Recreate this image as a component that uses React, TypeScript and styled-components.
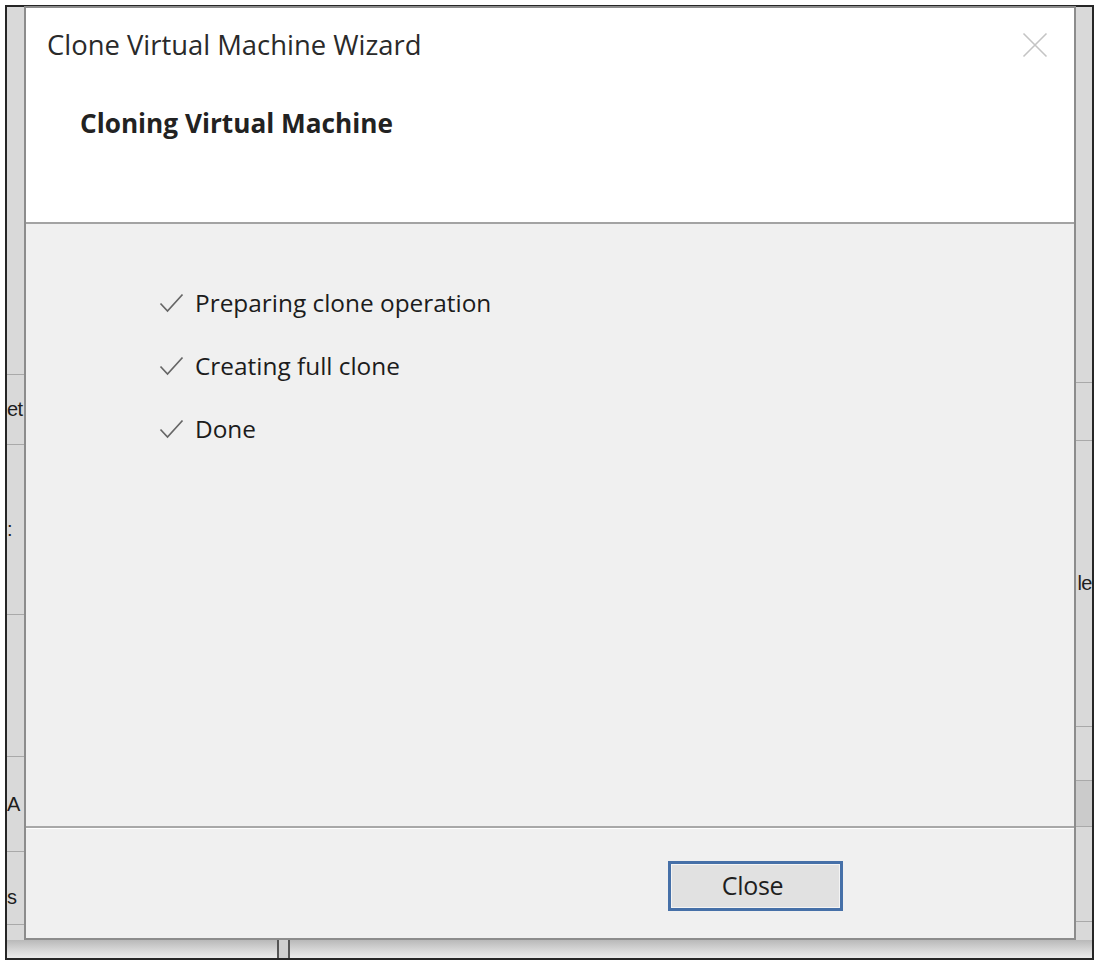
import React from "react";
import styled, { createGlobalStyle } from "styled-components";

const Global = createGlobalStyle`
  html, body { margin: 0; padding: 0; background: #ffffff; }
  body { font-family: "Open Sans", "Noto Sans", "Liberation Sans", sans-serif; }
`;

const Page = styled.div`
  padding: 5px 0 0 5px;
`;

const Frame = styled.div`
  width: 1085px;
  height: 951px;
  border: 2px solid #262626;
  background: #d6d6d6;
  display: grid;
  grid-template-columns: 17px 1fr 16px;
  grid-template-rows: 1fr 18px;
`;

const Strip = styled.div`
  display: flex;
  flex-direction: column;
  background: #d9d9d9;
  overflow: hidden;
`;

const StripRow = styled.div<{ $h: number; $align: "left" | "right"; $dots?: boolean; $pt?: number }>`
  height: ${(p) => p.$h}px;
  box-sizing: border-box;
  padding-top: ${(p) => p.$pt ?? 0}px;
  flex: none;
  border-bottom: 1px solid #a9a9a9;
  display: flex;
  align-items: center;
  justify-content: ${(p) => (p.$align === "left" ? "flex-start" : "flex-end")};
  font-family: "Liberation Sans", Arial, sans-serif;
  font-size: 20px;
  color: #1e1e1e;
  white-space: nowrap;
  background: ${(p) => (p.$dots ? "#cbcbcb" : "transparent")};
  &:last-child { border-bottom: none; flex: 1; }
`;

const Fragment = styled.span`
  display: block;
  letter-spacing: -0.5px;
`;

const BottomStrip = styled.div`
  grid-column: 1 / -1;
  background: linear-gradient(#b9b9b9, #dcdcdc 65%, #ebebeb);
  display: flex;
  padding-left: 270px;
`;

const Splitter = styled.div`
  width: 9px;
  border-left: 2px solid #555;
  border-right: 2px solid #555;
  background: #cfcfcf;
`;

const Dialog = styled.div`
  display: flex;
  flex-direction: column;
  border: 2px solid #8c8c8c;
  background: #f0f0f0;
  margin-top: -1px;
`;

const Header = styled.div`
  height: 216px;
  flex: none;
  background: #ffffff;
  border-bottom: 2px solid #a3a3a3;
  position: relative;
  padding: 18px 0 0 21px;
  box-sizing: border-box;
`;

const Title = styled.div`
  font-size: 27.4px;
  color: #2a2a2a;
  line-height: 38px;
`;

const Heading = styled.div`
  margin: 41px 0 0 33px;
  font-size: 26.2px;
  font-weight: 700;
  color: #222;
  line-height: 36px;
`;

const CloseX = styled.button`
  position: absolute;
  top: 22px;
  right: 24px;
  width: 30px;
  height: 30px;
  padding: 0;
  border: none;
  background: transparent;
  display: flex;
  align-items: center;
  justify-content: center;
`;

const Body = styled.div`
  flex: 1;
  padding: 59px 0 0 133px;
  display: flex;
  flex-direction: column;
  gap: 24px;
`;

const Item = styled.div`
  display: flex;
  align-items: center;
  gap: 11px;
  height: 39px;
  font-size: 24.4px;
  color: #1c1c1c;
`;

const Footer = styled.div`
  height: 112px;
  flex: none;
  border-top: 2px solid #a8a8a8;
  box-shadow: inset 0 1px 0 #ffffff;
  display: flex;
  justify-content: flex-end;
  align-items: flex-start;
  padding: 33px 231px 0 0;
  box-sizing: border-box;
`;

const Button = styled.button`
  width: 175px;
  height: 50px;
  border: 3px solid #4670a8;
  background: #e1e1e1;
  box-shadow: inset 0 0 0 1px #f4f4f4;
  font-family: "Open Sans", "Noto Sans", sans-serif;
  font-size: 25px;
  color: #1f1f1f;
  letter-spacing: -0.3px;
  padding: 0 6px 2px 0;
`;

const Check = () => (
  <svg width="25" height="20" viewBox="0 0 25 20">
    <polyline points="1.5,10.5 8.5,18 23.5,1.5" fill="none" stroke="#666666" strokeWidth="1.7" />
  </svg>
);

type Row = { h: number; t?: string; dots?: boolean; pt?: number };

const leftRows: Row[] = [
  { h: 368 },
  { h: 70, t: "et" },
  { h: 170, t: ":" },
  { h: 142 },
  { h: 95, t: "A" },
  { h: 73, t: "s", pt: 18 },
  { h: 20 },
];

const rightRows: Row[] = [
  { h: 376 },
  { h: 58 },
  { h: 286, t: "le" },
  { h: 54 },
  { h: 46, dots: true },
  { h: 95 },
  { h: 20 },
];

const steps = ["Preparing clone operation", "Creating full clone", "Done"];

export default function App() {
  return (
    <Page>
      <Global />
      <Frame>
        <Strip>
          {leftRows.map((r, i) => (
            <StripRow key={i} $h={r.h} $align="left" $pt={r.pt}>
              {r.t ? <Fragment>{r.t}</Fragment> : null}
            </StripRow>
          ))}
        </Strip>
        <Dialog>
          <Header>
            <Title>Clone Virtual Machine Wizard</Title>
            <Heading>Cloning Virtual Machine</Heading>
            <CloseX aria-label="Close">
              <svg width="26" height="26" viewBox="0 0 26 26">
                <path d="M1.5 1.5 L24.5 24.5 M24.5 1.5 L1.5 24.5" stroke="#c4c4c4" strokeWidth="1.6" fill="none" />
              </svg>
            </CloseX>
          </Header>
          <Body>
            {steps.map((s) => (
              <Item key={s}>
                <Check />
                <span>{s}</span>
              </Item>
            ))}
          </Body>
          <Footer>
            <Button>Close</Button>
          </Footer>
        </Dialog>
        <Strip>
          {rightRows.map((r, i) => (
            <StripRow key={i} $h={r.h} $align="right" $dots={r.dots}>
              {r.t ? <Fragment>{r.t}</Fragment> : null}
            </StripRow>
          ))}
        </Strip>
        <BottomStrip>
          <Splitter />
        </BottomStrip>
      </Frame>
    </Page>
  );
}
